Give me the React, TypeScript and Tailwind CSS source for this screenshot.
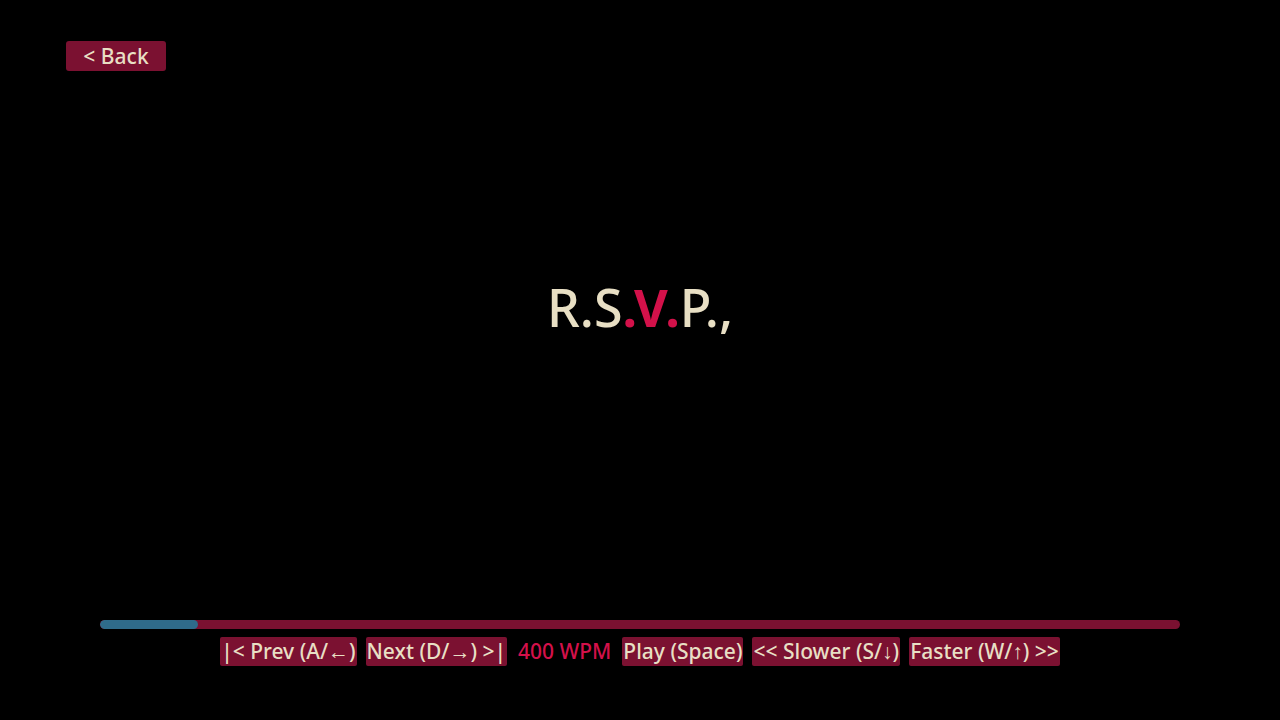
export default function App() {
  const controls = [
    { label: '|< Prev (A/←)', button: true },
    { label: 'Next (D/→) >|', button: true },
    { label: '400 WPM', button: false },
    { label: 'Play (Space)', button: true },
    { label: '<< Slower (S/↓)', button: true },
    { label: 'Faster (W/↑) >>', button: true },
  ]

  return (
    <div className="w-[1280px] h-[720px] bg-black flex flex-col font-['Noto_Sans',sans-serif] font-medium text-[#e8dfc4] overflow-hidden">
      <div className="pl-[66px] pt-[41px]">
        <button className="h-[30px] w-[100px] bg-[#7b1131] rounded-[3px] text-[21px] leading-[30px] font-medium text-[#e8dfc4]">
          &lt; Back
        </button>
      </div>

      {/* Word display */}
      <div className="flex-1 flex items-center justify-center pb-[78px]">
        <div className="text-[52px] leading-none">
          <span>R.S</span>
          <span className="text-[#d3114a] font-bold">.V.</span>
          <span>P.,</span>
        </div>
      </div>

      {/* Progress + controls */}
      <div className="px-[100px] pb-[54px] flex flex-col items-center gap-[8px]">
        <div className="w-full h-[9px] rounded-full bg-[#7b1131] overflow-hidden">
          <div className="h-full w-[98px] rounded-full bg-[#2f6b8a]" />
        </div>
        <div className="flex items-center gap-[9px] h-[29px]">
          {controls.map(c =>
            c.button ? (
              <button key={c.label} className="h-[29px] px-[1px] bg-[#7b1131] rounded-[2px] text-[21px] leading-[29px] font-medium text-[#e8dfc4]">
                {c.label}
              </button>
            ) : (
              <span key={c.label} className="px-[2px] text-[21px] leading-[29px] text-[#d3114a]">
                {c.label}
              </span>
            )
          )}
        </div>
      </div>
    </div>
  )
}
